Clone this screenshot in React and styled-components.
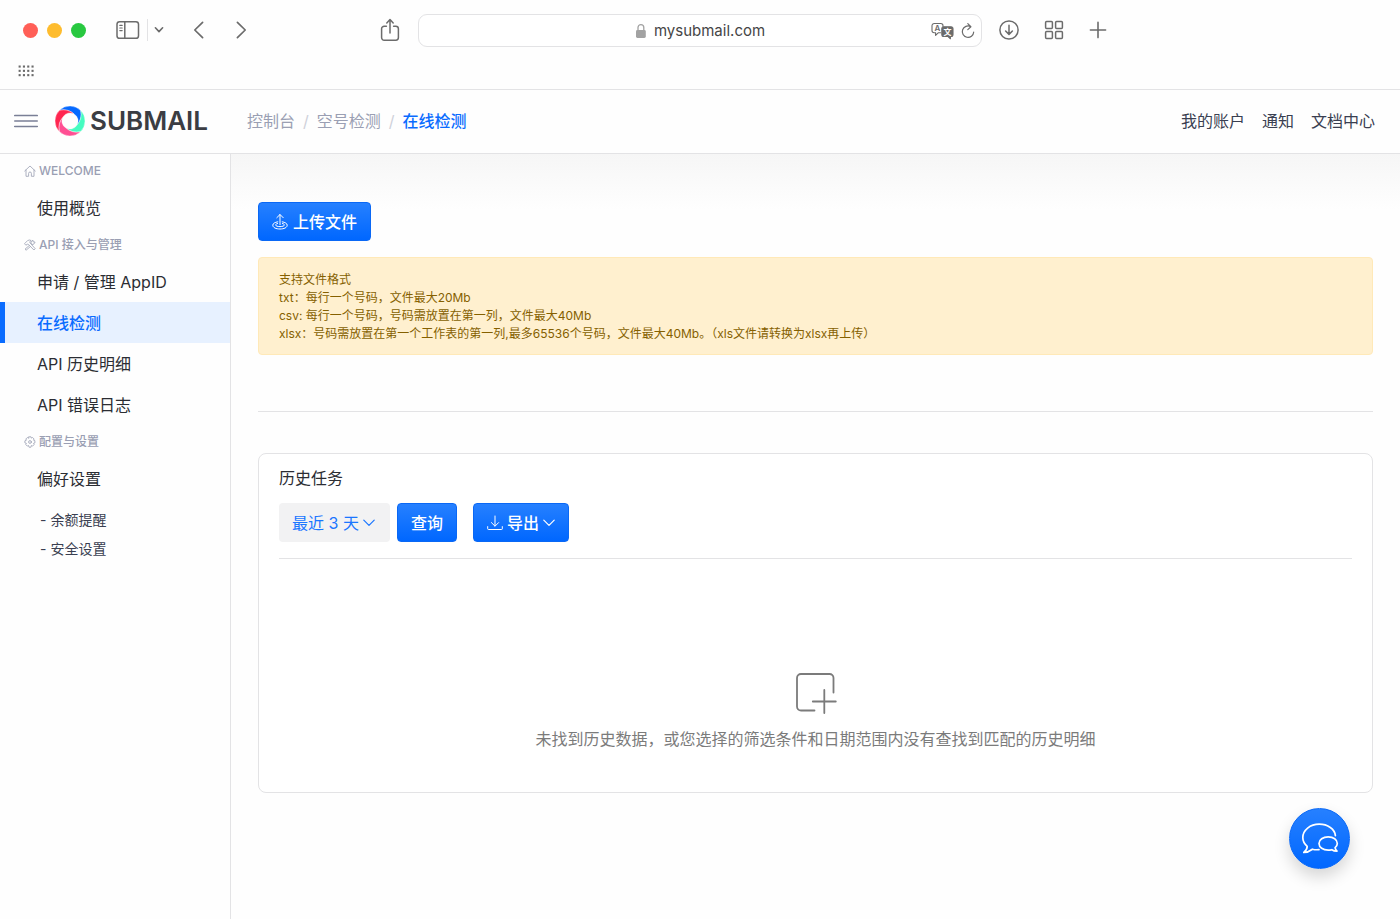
/**
 * Number check console page
 */

import React from 'react';
import styled, { createGlobalStyle, css } from 'styled-components';

const palette = {
  BLUE: '#0a6cff',
  DARK: '#2b2d33',
  NAVY: '#3a3f51',
  MUTED: '#9a9fb3',
  CHROME: '#6b6b6b',
  LINE: '#e3e3e5',
};

const GlobalStyle = createGlobalStyle`
  * {
    box-sizing: border-box;
  }

  body {
    margin: 0;
    background: #fefefe;
    color: ${palette.DARK};
    font-family: Inter, "Noto Sans CJK SC", sans-serif;
    font-size: 16px;
    line-height: 24px;
  }

  button, input, select {
    font: inherit;
  }

  ul, ol, p, h2, h3 {
    margin: 0;
    padding: 0;
    list-style: none;
    font-weight: 400;
  }

  a {
    color: inherit;
    text-decoration: none;
  }

  svg {
    display: block;
    flex: none;
  }
`;

/* ---------- icons ---------- */

function Icon({ w = 24, h = w, box = `0 0 ${w} ${h}`, stroke = 1.5, children }) {
  return (
    <svg
      width={w}
      height={h}
      viewBox={box}
      fill="none"
      stroke="currentColor"
      strokeWidth={stroke}
      strokeLinecap="round"
      strokeLinejoin="round"
      aria-hidden="true"
    >
      {children}
    </svg>
  );
}

const SidebarIcon = () => (
  <Icon w={24} h={20}>
    <rect x="1" y="1.7" width="21.5" height="16.6" rx="2.6" />
    <path d="M8.8 2v16" />
    <path d="M3.8 5.4h2.4M3.8 8h2.4M3.8 10.6h2.4" strokeWidth="1.1" />
  </Icon>
);

const SmallChevron = () => (
  <Icon w={10} h={8} stroke={1.6}>
    <path d="M1.4 1.8 5 5.6l3.6-3.8" />
  </Icon>
);

const BackIcon = () => (
  <Icon w={12} h={18} stroke={1.7}>
    <path d="M9.6 1.4 1.8 9l7.8 7.6" />
  </Icon>
);

const ForwardIcon = () => (
  <Icon w={12} h={18} stroke={1.7}>
    <path d="M2.4 1.4 10.2 9l-7.8 7.6" />
  </Icon>
);

const ShareIcon = () => (
  <Icon w={20} h={24}>
    <path d="M6.4 8.2H4.2a2.6 2.6 0 0 0-2.6 2.6v8.8a2.6 2.6 0 0 0 2.6 2.6h11.6a2.6 2.6 0 0 0 2.6-2.6v-8.8a2.6 2.6 0 0 0-2.6-2.6h-2.2" />
    <path d="M10 15V1.8M6.8 4.9 10 1.6l3.2 3.3" />
  </Icon>
);

const LockIcon = () => (
  <svg width="12" height="16" viewBox="0 0 12 16" aria-hidden="true">
    <rect x="1" y="7" width="9.8" height="8" rx="1.4" fill="#a2a2a2" />
    <path d="M3 7.5V4.6a2.9 2.9 0 0 1 5.8 0v2.9" fill="none" stroke="#a2a2a2" strokeWidth="1.3" />
  </svg>
);

const GlyphText = styled.text`
  font-family: Inter, "Noto Sans CJK SC", sans-serif;
  font-weight: 600;
  stroke: none;
`;

const TranslateIcon = () => (
  <Icon w={23} h={18} stroke={1.1}>
    <path d="M9.6 10.8H7.2L4.6 13.4v-2.6H3.2A2.2 2.2 0 0 1 1 8.6V3.7a2.2 2.2 0 0 1 2.2-2.2h6.6A2.2 2.2 0 0 1 12 3.7v.9" />
    <path
      d="M12.8 4.8H20a2 2 0 0 1 2 2v5.6a2 2 0 0 1-2 2h-.6v2.4l-2.6-2.4h-4a2 2 0 0 1-2-2V6.8a2 2 0 0 1 2-2Z"
      fill="currentColor"
    />
    <GlyphText x="3.6" y="9.2" fontSize="8" fill="currentColor">A</GlyphText>
    <GlyphText x="12.4" y="12.6" fontSize="8" fill="#fff">文</GlyphText>
  </Icon>
);

const ReloadIcon = () => (
  <Icon w={14} h={18} stroke={1.2}>
    <path d="M9.6 4.6A5.7 5.7 0 1 0 12.7 10M6.8 1.6l3.1 3.1-3.1 2.9" />
  </Icon>
);

const DownloadIcon = () => (
  <Icon w={20} h={20}>
    <circle cx="10" cy="10" r="9.1" />
    <path d="M10 5.2v9M6.6 11l3.4 3.4 3.4-3.4" />
  </Icon>
);

const TilesIcon = () => (
  <Icon w={20} h={20}>
    <rect x="1.6" y="1.6" width="6.8" height="6.8" rx="1" />
    <rect x="11.6" y="1.6" width="6.8" height="6.8" rx="1" />
    <rect x="1.6" y="11.6" width="6.8" height="6.8" rx="1" />
    <rect x="11.6" y="11.6" width="6.8" height="6.8" rx="1" />
  </Icon>
);

const PlusIcon = () => (
  <Icon w={18} h={18} stroke={1.6}>
    <path d="M9 1.4v15.2M1.4 9h15.2" />
  </Icon>
);

const DotsIcon = () => (
  <svg width="16" height="12" viewBox="0 0 16 12" fill="#6b6b6b" aria-hidden="true">
    {[0, 4.3, 8.6].map((y) =>
      [0, 4.3, 8.6, 12.9].map((x) => <rect key={`${x}-${y}`} x={x + 0.6} y={y + 0.5} width="2.1" height="2.1" />)
    )}
  </svg>
);

const BurgerIcon = () => (
  <Icon w={24} h={14} stroke={1.5}>
    <path d="M.7 1.6h22.6M.7 7h22.6M.7 12.4h22.6" />
  </Icon>
);

// one quarter of the ring, turned four times
const BLADE = 'M-10.5-10.7A15 15 0 0 1 10.7-10.5Q12.5-2 7 4A8 8 0 0 0 4-7Q-2-12.5-10.5-10.7Z';

const LogoMark = () => (
  <svg width="32" height="32" viewBox="-16 -16 32 32" stroke="#fff" strokeWidth=".4" aria-hidden="true">
    <path d={BLADE} fill="#0569ff" />
    <path d={BLADE} fill="#45fcc0" transform="rotate(90)" />
    <path d={BLADE} fill="#ff4f93" transform="rotate(180)" />
    <path d={BLADE} fill="#ff2650" transform="rotate(270)" />
  </svg>
);

const HomeIcon = () => (
  <Icon w={12} h={12} stroke={0.8}>
    <path d="M.7 6 6 1l5.3 5M2 5v6.3h2.6V8.4a1.4 1.4 0 0 1 2.8 0v2.9H10V5" />
  </Icon>
);

const ToolsIcon = () => (
  <Icon w={12} h={12} stroke={0.8}>
    <path d="M.8 4.4 3.7 1.5Q5.4.5 7.2 1.5L5.8 2.6 6 3.8l5.2 5.9L9.900 11 4.400 5.400 3.200 5.200 2.200 6Z" />
    <path d="M7.300 4.700 7 3.200 8.900 1.100 9.100 2.800 11.100 3.100 9.700 5.200 8.200 5.500M5 6.700 1 10.200 2.100 11.200 6.100 7.800" />
  </Icon>
);

const GearIcon = () => (
  <Icon w={12} h={12} stroke={0.8}>
    <path d="M5 .8h2l.4 1.3 1.2-.6 1.5 1.5-.6 1.2 1.400.5v2.200l-1.400.5.6 1.200-1.500 1.500-1.200-.6-.4 1.700H5l-.5-1.700-1.200.6-1.500-1.500.6-1.200-1.500-.5V4.800l1.500-.6-.6-1.200 1.500-1.500 1.200.6Z" />
    <circle cx="6" cy="6" r="1.4" />
  </Icon>
);

const UploadIcon = () => (
  <Icon w={16} h={18} stroke={1}>
    <path d="M8 11.6v-10M4.800 4.700 8 1.500l3.200 3.200" />
    <path d="M5.800 8.800C2.800 9.300.8 10.500.8 12.200.8 14.600 4 16 8 16s7.200-1.400 7.200-3.800c0-1.700-2-2.900-5-3.400" />
    <path d="M5.600 10.500C4.400 10.800 3.600 11.300 3.600 11.900 3.600 12.900 5.500 13.600 8 13.600s4.400-.7 4.400-1.700c0-.6-.8-1.100-2-1.400" />
  </Icon>
);

const ExportIcon = () => (
  <Icon w={16} h={16} stroke={1}>
    <path d="M8 1v10M4.400 7.600 8 11.200l3.600-3.600M.7 11.600v2.200q0 .7.700.7h13.200q.7 0 .7-.7v-2.200" />
  </Icon>
);

const ThinChevron = () => (
  <Icon w={12} h={8} stroke={1.2}>
    <path d="M.8 1.2 6 6.4l5.2-5.2" />
  </Icon>
);

const EmptyIcon = () => (
  <Icon w={42} h={42} stroke={1.8}>
    <path d="M19.500 38.500H6A4 4 0 0 1 2 34.500V6a4 4 0 0 1 4-4h28.500a4 4 0 0 1 4 4v14.500" />
    <path d="M29.300 18v23M17.800 29.500h23" />
  </Icon>
);

const ChatIcon = () => (
  <Icon w={38} h={34} stroke={1.7}>
    <path d="M18 27.600c-2.400.3-4.600.1-6.600-.4-2.500 1.900-5.200 3.200-8.600 3.200 2.200-1.900 3.400-3.700 3.400-6C3.400 22 1.800 19 1.800 15.600 1.800 8.200 9.200 2.200 18.200 2.200 26.800 2.200 33.800 7.200 34.400 13.600" />
    <path d="M27.200 14.800c-5.200 0-9.200 2.900-9.200 6.700s4 6.700 9.200 6.700c1.300 0 2.500-.2 3.600-.5 1.500 1 3.200 1.400 5.200 1.400-1.200-1.200-1.800-2.300-1.900-3.500 1.400-1.100 2.200-2.500 2.200-4.100 0-3.800-3.900-6.700-9.100-6.700Z" />
  </Icon>
);

/* ---------- browser bar ---------- */

const Browser = styled.div`
  height: 90px;
  border-bottom: 1px solid ${palette.LINE};
  color: ${palette.CHROME};
`;

const BrowserBar = styled.div`
  display: grid;
  grid-template-columns: minmax(418px, 1fr) minmax(0, 564px) minmax(418px, 1fr);
  align-items: center;
  height: 60px;
`;

const BarSide = styled.div`
  display: flex;
  align-items: center;
  gap: ${(props) => props.$gap || 0}px;
  padding: ${(props) => props.$padding};
`;

const TrafficLights = styled.div`
  display: flex;
  gap: 9px;
  margin-right: 30px;
`;

const Light = styled.span`
  width: 15px;
  height: 15px;
  border-radius: 50%;
  background: ${(props) => props.$color};
`;

const PlainButton = styled.button`
  display: flex;
  padding: 0;
  border: none;
  background: none;
  color: inherit;
  cursor: pointer;
`;

const TabGroup = styled.div`
  display: flex;
  align-items: center;
  height: 22px;
  margin-left: 7px;
  padding-left: 6px;
  border-left: 1px solid ${palette.LINE};
`;

const HistoryButtons = styled.div`
  display: flex;
  gap: 30px;
  margin-left: 29px;
`;

const ShareSlot = styled.div`
  margin-left: auto;
`;

const AddressBar = styled.div`
  display: grid;
  grid-template-columns: 1fr auto 1fr;
  align-items: center;
  height: 33px;
  padding: 2px 6px 0;
  border: 1px solid ${palette.LINE};
  border-radius: 9px;
  background: #fff;
`;

const AddressLabel = styled.label`
  grid-column: 2;
  display: flex;
  align-items: center;
  gap: 7px;
`;

const AddressInput = styled.input`
  field-sizing: content;
  padding: 0;
  border: none;
  outline: none;
  background: none;
  color: #454545;
  font-size: 15px;
  line-height: 20px;
`;

const AddressActions = styled.div`
  display: flex;
  justify-content: flex-end;
  align-items: center;
  gap: 7px;
`;

const Favorites = styled.div`
  padding: 5px 18px;
`;

/* ---------- page header ---------- */

const Header = styled.header`
  display: flex;
  align-items: center;
  height: 64px;
  padding: 0 25px 2px 14px;
  border-bottom: 1px solid ${palette.LINE};
  color: ${palette.NAVY};
`;

const BurgerButton = styled(PlainButton)`
  color: #7a7f96;
`;

const Logo = styled.a`
  display: flex;
  align-items: center;
  gap: 4px;
  margin: 0 39px 0 16px;
  color: #3b3d43;
  font-size: 26px;
  font-weight: 600;
  line-height: 32px;
`;

const Breadcrumb = styled.ol`
  display: flex;
  color: ${palette.MUTED};
`;

const Crumb = styled.li`
  &:not(:first-child)::before {
    content: '/';
    padding: 0 8px;
    color: #cfd1da;
    font-weight: 400;
  }

  ${(props) => props.$current && css`
    color: ${palette.BLUE};
    font-weight: 500;
  `}
`;

const HeaderNav = styled.nav`
  display: flex;
  gap: 17px;
  margin-left: auto;
`;

/* ---------- sidebar ---------- */

const Body = styled.div`
  display: grid;
  grid-template-columns: 231px minmax(0, 1fr);
  min-height: calc(100vh - 154px);
`;

const Sidebar = styled.nav`
  border-right: 1px solid ${palette.LINE};
`;

const GroupTitle = styled.h3`
  display: flex;
  align-items: center;
  gap: 3px;
  height: 33px;
  padding-left: 24px;
  color: ${palette.MUTED};
  font-size: 12px;
  font-weight: 500;
`;

const MenuLink = styled.a`
  display: flex;
  align-items: center;
  height: 41px;
  padding-left: 32px;
  border-left: 5px solid transparent;

  ${(props) => props.$active && css`
    border-color: ${palette.BLUE};
    background: #e7f1ff;
    color: ${palette.BLUE};
    font-weight: 500;
  `}
`;

const SubMenu = styled.ul`
  margin-top: 6px;
  padding-left: 40px;
  color: ${palette.NAVY};
  font-size: 14px;
  line-height: 29px;
`;

/* ---------- main area ---------- */

const Main = styled.main`
  padding: 48px 27px;
  background: linear-gradient(#f6f6f6, #fefefe 56px);
`;

const BlueButton = styled.button`
  display: flex;
  align-items: center;
  gap: ${(props) => props.$gap || 0}px;
  height: 39px;
  padding: 0 13px;
  border: 1px solid #0a68f5;
  border-radius: 4px;
  background: linear-gradient(#2680ff, #0067ff);
  color: #fff;
  font-weight: 500;
  cursor: pointer;
`;

const FormatNote = styled.div`
  margin-top: 16px;
  padding: 13px 20px 11px;
  border: 1px solid #ffe9b8;
  border-radius: 4px;
  background: #fff0cf;
  color: #856000;
  font-size: 12px;
  line-height: 18px;
`;

const Divider = styled.hr`
  margin: 56px 0 41px;
  border: none;
  border-top: 1px solid ${palette.LINE};
`;

const Card = styled.section`
  padding: 12px 20px 41px;
  border: 1px solid ${palette.LINE};
  border-radius: 8px;
  background: #fff;
`;

const CardTitle = styled.h2`
  font-size: 16px;
`;

const Filters = styled.div`
  display: flex;
  gap: 7px;
  padding: 13px 0 16px;
  border-bottom: 1px solid ${palette.LINE};
`;

const SelectWrapper = styled.label`
  position: relative;
  color: #1a76ff;
`;

const RangeSelect = styled.select`
  appearance: none;
  height: 39px;
  padding: 0 31px 0 13px;
  border: none;
  border-radius: 4px;
  background: #f2f2f3;
  color: inherit;
`;

const SelectArrow = styled.span`
  position: absolute;
  top: 16px;
  right: 15px;
  pointer-events: none;
`;

const ExportButton = styled(BlueButton)`
  margin-left: 9px;
`;

const Empty = styled.div`
  display: flex;
  flex-direction: column;
  align-items: center;
  gap: 13px;
  padding-top: 113px;
  color: #7b7b7b;
`;

const ChatButton = styled.button`
  position: fixed;
  right: 50px;
  bottom: 50px;
  display: flex;
  align-items: center;
  justify-content: center;
  width: 61px;
  height: 61px;
  padding: 0;
  border: 1px solid #0a68f5;
  border-radius: 50%;
  background: linear-gradient(#2680ff, #0067ff);
  box-shadow: 0 8px 16px rgba(0, 0, 0, 0.16);
  color: #fff;
  cursor: pointer;
`;

/* ---------- content ---------- */

const MENU = [
  { title: 'WELCOME', icon: <HomeIcon />, links: ['使用概览'] },
  {
    title: 'API 接入与管理',
    icon: <ToolsIcon />,
    links: ['申请 / 管理 AppID', '在线检测', 'API 历史明细', 'API 错误日志'],
  },
  { title: '配置与设置', icon: <GearIcon />, links: ['偏好设置'], sub: ['余额提醒', '安全设置'] },
];

const ACTIVE = '在线检测';

function BrowserChrome() {
  return (
    <Browser>
      <BrowserBar>
        <BarSide $padding="0 18px 0 23px">
          <TrafficLights>
            <Light $color="#ff5f57" />
            <Light $color="#febc2e" />
            <Light $color="#28c840" />
          </TrafficLights>
          <PlainButton aria-label="Sidebar"><SidebarIcon /></PlainButton>
          <TabGroup>
            <PlainButton aria-label="Tab groups"><SmallChevron /></PlainButton>
          </TabGroup>
          <HistoryButtons>
            <PlainButton aria-label="Back"><BackIcon /></PlainButton>
            <PlainButton aria-label="Forward"><ForwardIcon /></PlainButton>
          </HistoryButtons>
          <ShareSlot>
            <PlainButton aria-label="Share"><ShareIcon /></PlainButton>
          </ShareSlot>
        </BarSide>

        <AddressBar>
          <AddressLabel>
            <LockIcon />
            <AddressInput aria-label="Address" defaultValue="mysubmail.com" />
          </AddressLabel>
          <AddressActions>
            <PlainButton aria-label="Translate"><TranslateIcon /></PlainButton>
            <PlainButton aria-label="Reload"><ReloadIcon /></PlainButton>
          </AddressActions>
        </AddressBar>

        <BarSide $gap={25} $padding="0 17px">
          <PlainButton aria-label="Downloads"><DownloadIcon /></PlainButton>
          <PlainButton aria-label="Tab overview"><TilesIcon /></PlainButton>
          <PlainButton aria-label="New tab"><PlusIcon /></PlainButton>
        </BarSide>
      </BrowserBar>
      <Favorites>
        <PlainButton aria-label="Favorites"><DotsIcon /></PlainButton>
      </Favorites>
    </Browser>
  );
}

function SideMenu() {
  return (
    <Sidebar>
      {MENU.map((group) => (
        <React.Fragment key={group.title}>
          <GroupTitle>{group.icon}{group.title}</GroupTitle>
          <ul>
            {group.links.map((link) => (
              <li key={link}>
                <MenuLink href="#" $active={link === ACTIVE}>{link}</MenuLink>
              </li>
            ))}
          </ul>
          {group.sub && (
            <SubMenu>
              {group.sub.map((link) => (
                <li key={link}><a href="#">- {link}</a></li>
              ))}
            </SubMenu>
          )}
        </React.Fragment>
      ))}
    </Sidebar>
  );
}

function App() {
  return (
    <>
      <GlobalStyle />
      <BrowserChrome />

      {/* LOGO, BREADCRUMB AND ACCOUNT LINKS */}
      <Header>
        <BurgerButton aria-label="Menu"><BurgerIcon /></BurgerButton>
        <Logo href="#"><LogoMark />SUBMAIL</Logo>
        <Breadcrumb>
          <Crumb><a href="#">控制台</a></Crumb>
          <Crumb><a href="#">空号检测</a></Crumb>
          <Crumb $current><a href="#">在线检测</a></Crumb>
        </Breadcrumb>
        <HeaderNav>
          <a href="#">我的账户</a>
          <a href="#">通知</a>
          <a href="#">文档中心</a>
        </HeaderNav>
      </Header>

      <Body>
        <SideMenu />

        <Main>
          <BlueButton $gap={5}><UploadIcon />上传文件</BlueButton>

          {/* SUPPORTED FILE FORMATS */}
          <FormatNote>
            <p>支持文件格式</p>
            <p>txt：每行一个号码，文件最大20Mb</p>
            <p>csv: 每行一个号码，号码需放置在第一列，文件最大40Mb</p>
            <p>xlsx：号码需放置在第一个工作表的第一列,最多65536个号码，文件最大40Mb。（xls文件请转换为xlsx再上传）</p>
          </FormatNote>

          <Divider />

          {/* TASK HISTORY */}
          <Card>
            <CardTitle>历史任务</CardTitle>
            <Filters>
              <SelectWrapper>
                <RangeSelect aria-label="日期范围">
                  <option>最近 3 天</option>
                </RangeSelect>
                <SelectArrow><ThinChevron /></SelectArrow>
              </SelectWrapper>
              <BlueButton>查询</BlueButton>
              <ExportButton $gap={4}><ExportIcon />导出<ThinChevron /></ExportButton>
            </Filters>
            <Empty>
              <EmptyIcon />
              <p>未找到历史数据，或您选择的筛选条件和日期范围内没有查找到匹配的历史明细</p>
            </Empty>
          </Card>
        </Main>
      </Body>

      <ChatButton aria-label="Chat"><ChatIcon /></ChatButton>
    </>
  );
}

export default App;
